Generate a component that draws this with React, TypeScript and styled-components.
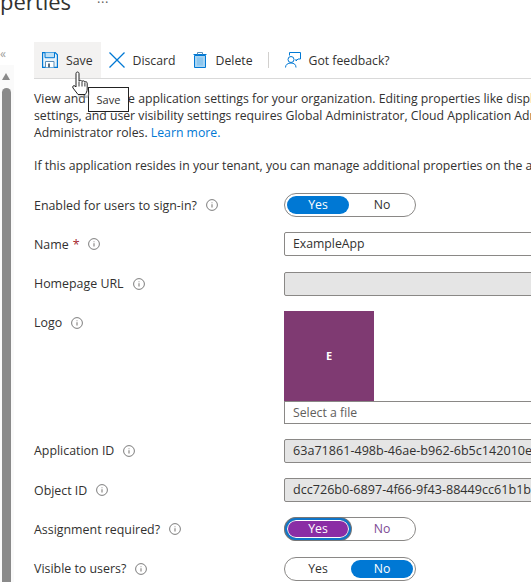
import React from 'react';
import styled, { createGlobalStyle } from 'styled-components';

const GlobalStyle = createGlobalStyle`
  html, body {
    margin: 0;
    padding: 0;
    width: 531px;
    height: 582px;
    overflow: hidden;
    background: #fff;
  }
  body {
    font-family: "Open Sans", "Liberation Sans", sans-serif;
    font-size: 12.25px;
    color: #323130;
  }
`;

const Page = styled.div`
  position: relative;
  width: 531px;
  height: 582px;
  overflow: hidden;
`;

const TitleBar = styled.div`
  height: 42px;
  display: flex;
  align-items: flex-start;
  gap: 26px;
  margin-top: -15px;
  margin-bottom: 15px;
`;

const Title = styled.h1`
  margin: 0;
  font-size: 22px;
  font-weight: 400;
  line-height: 32px;
  color: #323130;
`;

const MoreDots = styled.span`
  font-size: 13px;
  line-height: 34px;
  letter-spacing: 0.5px;
  color: #605e5c;
`;

const Body = styled.div`
  display: flex;
  align-items: flex-start;
`;

const Rail = styled.div`
  width: 34px;
  flex: none;
  display: flex;
  flex-direction: column;
`;

const Collapse = styled.div`
  height: 23px;
  font-size: 12px;
  line-height: 24px;
  color: #a19f9d;
`;

const ScrollTrack = styled.div`
  width: 14px;
  height: 517px;
  padding-top: 8px;
  background: #fafafa;
`;

const ScrollArrow = styled.div`
  width: 0;
  height: 0;
  margin-left: 2px;
  border-left: 4.5px solid transparent;
  border-right: 4.5px solid transparent;
  border-bottom: 7px solid #8a8a8a;
`;

const ScrollThumb = styled.div`
  width: 9px;
  height: 500px;
  margin: 8px 0 0 2px;
  border-radius: 4.5px 4.5px 0 0;
  background: #8a8a8a;
`;

const Main = styled.div`
  flex: 1;
  min-width: 0;
`;

const Toolbar = styled.div`
  display: flex;
  align-items: stretch;
  height: 36px;
  border-bottom: 1px solid #d9d9d9;
`;

const ToolButton = styled.div<{ $active?: boolean }>`
  display: flex;
  align-items: center;
  gap: 8px;
  padding: 0 8px;
  white-space: nowrap;
  background: ${(p) => (p.$active ? '#f3f2f1' : 'transparent')};
`;

const Separator = styled.div`
  width: 1px;
  height: 16px;
  margin: 10px 8px 0 7px;
  background: #d2d0ce;
`;

const Intro = styled.div`
  margin-top: 11px;
  line-height: 17px;
  white-space: nowrap;
`;

const TextLine = styled.div`
  height: 17px;
`;

const Notice = styled(TextLine)`
  margin-top: 16px;
  white-space: nowrap;
`;

const LearnMore = styled.a`
  color: #0078d4;
  text-decoration: none;
`;

const Form = styled.div`
  display: flex;
  flex-direction: column;
  gap: 15.2px;
  margin-top: 19.2px;
`;

const Row = styled.div`
  display: grid;
  grid-template-columns: 250px 300px;
  align-items: start;
`;

const Label = styled.div`
  display: flex;
  align-items: center;
  gap: 9px;
  height: 24px;
  font-size: 12.4px;
  white-space: nowrap;
`;

const Required = styled.span`
  margin-left: -5px;
  color: #a4262c;
`;

const TextField = styled.div<{ $disabled?: boolean; $placeholder?: boolean }>`
  box-sizing: border-box;
  height: ${(p) => (p.$placeholder ? '23px' : '24px')};
  padding: 0 8px;
  border: 1px solid #8a8886;
  border-radius: ${(p) => (p.$placeholder ? '0' : '2px')};
  background: ${(p) => (p.$disabled ? '#e5e5e5' : '#fff')};
  color: ${(p) => (p.$placeholder ? '#605e5c' : '#323130')};
  font-size: ${(p) => (p.$disabled ? '12.6px' : '12.25px')};
  line-height: ${(p) => (p.$placeholder ? '21px' : '22px')};
  white-space: nowrap;
`;

const LogoTile = styled.div`
  display: flex;
  align-items: center;
  justify-content: center;
  width: 90px;
  height: 90px;
  background: #7f3a72;
  color: #fff;
  font-size: 11px;
  font-weight: 700;
`;

const Toggle = styled.div`
  box-sizing: border-box;
  display: flex;
  gap: 2px;
  width: 132px;
  height: 24px;
  padding: 2px;
  border: 1px solid #8a8886;
  border-radius: 12px;
`;

const ToggleOption = styled.div<{ $on?: boolean; $focused?: boolean }>`
  box-sizing: border-box;
  width: 62px;
  height: 18px;
  border-radius: 9px;
  text-align: center;
  line-height: 18px;
  color: ${(p) => (p.$on ? '#fff' : p.$focused ? '#7d4a94' : '#323130')};
  background: ${(p) => (p.$on ? (p.$focused ? '#8a2da5' : '#0078d4') : 'transparent')};
  ${(p) =>
    p.$on && p.$focused
      ? 'border: 1px solid #fff; line-height: 16px; outline: 2px solid #0f75c8; box-shadow: 0 0 0 3px #777;'
      : ''}
`;

const Tooltip = styled.div`
  position: absolute;
  left: 88px;
  top: 87px;
  box-sizing: border-box;
  width: 41px;
  height: 25px;
  border: 1px solid #222;
  background: #fff;
  font-size: 11px;
  line-height: 24px;
  text-align: center;
  color: #323130;
`;

const Pointer = styled.svg`
  position: absolute;
  left: 71px;
  top: 71px;
`;

const InfoCircle = styled.svg`
  flex: none;
`;

const InfoIcon = () => (
  <InfoCircle width="12" height="12" viewBox="0 0 12 12" fill="none">
    <circle cx="6" cy="6" r="5.4" stroke="#6e6e6e" strokeWidth="0.9" />
    <path d="M6 5.2v3.4" stroke="#8a8886" strokeWidth="1.2" />
    <path d="M6 3.2v1.1" stroke="#a19f9d" strokeWidth="1.1" />
  </InfoCircle>
);

const SaveIcon = () => (
  <svg width="16" height="16" viewBox="0 0 16 16" fill="none">
    <path d="M.6.6h12.6l2.2 2.2v12.6H.6z" fill="#eaf4fb" stroke="#0078d4" strokeWidth="1.2" />
    <path d="M3 .6v5.1h9.500V.6" fill="#bfe0f5" stroke="#0078d4" />
    <path d="M3.500 15.400V9.500h8.500v5.900" fill="#fff" stroke="#5c8fb8" />
    <path d="M6 11.500h2v3.900H6z" fill="#5c6f80" />
  </svg>
);

const DiscardIcon = () => (
  <svg width="16" height="16" viewBox="0 0 16 16" fill="none">
    <path d="M.5.5l15 15M15.500.5l-15 15" stroke="#0078d4" strokeWidth="1.3" />
  </svg>
);

const DeleteIcon = () => (
  <svg width="16" height="16" viewBox="0 0 16 16" fill="none">
    <path d="M2.500 3.500h11v12h-11z" fill="#a8d4f2" stroke="#0078d4" />
    <path d="M1.500 2.500h13" stroke="#0078d4" />
    <path d="M5.500 2.500V.5h5v2" stroke="#5c8fb8" />
    <path d="M5 5.500h6v8H5z" fill="#8cc6ee" />
  </svg>
);

const FeedbackIcon = () => (
  <svg width="16" height="16" viewBox="0 0 16 16" fill="none">
    <path d="M4.500 3.500V.5h11v6.500h-2.500l-2 2V7" stroke="#0078d4" />
    <circle cx="6" cy="7.500" r="3" stroke="#0078d4" fill="#fff" />
    <path d="M.5 15.500c0-3 2.500-4.500 5.500-4.500s5 1.500 5 4.500" stroke="#0078d4" />
  </svg>
);

const HandCursor = () => (
  <Pointer width="20" height="28" viewBox="0 0 20 28">
    <path
      d="M5 2.500c0-2 3-2 3 0v7.500c1-1 2.500-.8 3 .3 1-.8 2.400-.5 2.800.6 1-.5 2.400 0 2.400 1.300V18c0 2.500-1 4-2 5.500H7L2 17c-1-1.500.5-3 2-2l1 1z"
      fill="#fff"
      stroke="#222"
      strokeWidth="1"
      strokeLinejoin="round"
    />
    <path d="M8 10.500v5M11 10.500v5M13.900 11.500v4" stroke="#222" strokeWidth="0.9" />
    <path d="M7 24.500h9.500l2-5.500v5l-2 3H8z" fill="#8a8a8a" opacity="0.5" />
  </Pointer>
);

const labelled = (text: string, required?: boolean) => (
  <Label>
    <span>{text}</span>
    {required && <Required>*</Required>}
    <InfoIcon />
  </Label>
);

export default function App() {
  return (
    <Page>
      <GlobalStyle />
      <TitleBar>
        <Title>perties</Title>
        <MoreDots>···</MoreDots>
      </TitleBar>
      <Body>
        <Rail>
          <Collapse>«</Collapse>
          <ScrollTrack>
            <ScrollArrow />
            <ScrollThumb />
          </ScrollTrack>
        </Rail>
        <Main>
          <Toolbar>
            <ToolButton $active>
              <SaveIcon />
              Save
            </ToolButton>
            <ToolButton>
              <DiscardIcon />
              Discard
            </ToolButton>
            <ToolButton>
              <DeleteIcon />
              Delete
            </ToolButton>
            <Separator />
            <ToolButton>
              <FeedbackIcon />
              Got feedback?
            </ToolButton>
          </Toolbar>
          <Intro>
            <TextLine>
              View and manage application settings for your organization. Editing properties like display information,
            </TextLine>
            <TextLine>
              settings, and user visibility settings requires Global Administrator, Cloud Application Administrator
            </TextLine>
            <TextLine>
              Administrator roles. <LearnMore>Learn more.</LearnMore>
            </TextLine>
          </Intro>
          <Notice>
            If this application resides in your tenant, you can manage additional properties on the application
          </Notice>
          <Form>
            <Row>
              {labelled('Enabled for users to sign-in?')}
              <Toggle>
                <ToggleOption $on>Yes</ToggleOption>
                <ToggleOption>No</ToggleOption>
              </Toggle>
            </Row>
            <Row>
              {labelled('Name', true)}
              <TextField>ExampleApp</TextField>
            </Row>
            <Row>
              {labelled('Homepage URL')}
              <TextField $disabled />
            </Row>
            <Row>
              {labelled('Logo')}
              <div>
                <LogoTile>E</LogoTile>
                <TextField $placeholder>Select a file</TextField>
              </div>
            </Row>
            <Row>
              {labelled('Application ID')}
              <TextField $disabled>63a71861-498b-46ae-b962-6b5c142010e5</TextField>
            </Row>
            <Row>
              {labelled('Object ID')}
              <TextField $disabled>dcc726b0-6897-4f66-9f43-88449cc61b1b</TextField>
            </Row>
            <Row>
              {labelled('Assignment required?')}
              <Toggle>
                <ToggleOption $on $focused>
                  Yes
                </ToggleOption>
                <ToggleOption $focused>No</ToggleOption>
              </Toggle>
            </Row>
            <Row>
              {labelled('Visible to users?')}
              <Toggle>
                <ToggleOption>Yes</ToggleOption>
                <ToggleOption $on>No</ToggleOption>
              </Toggle>
            </Row>
          </Form>
        </Main>
      </Body>
      <Tooltip>Save</Tooltip>
      <HandCursor />
    </Page>
  );
}
